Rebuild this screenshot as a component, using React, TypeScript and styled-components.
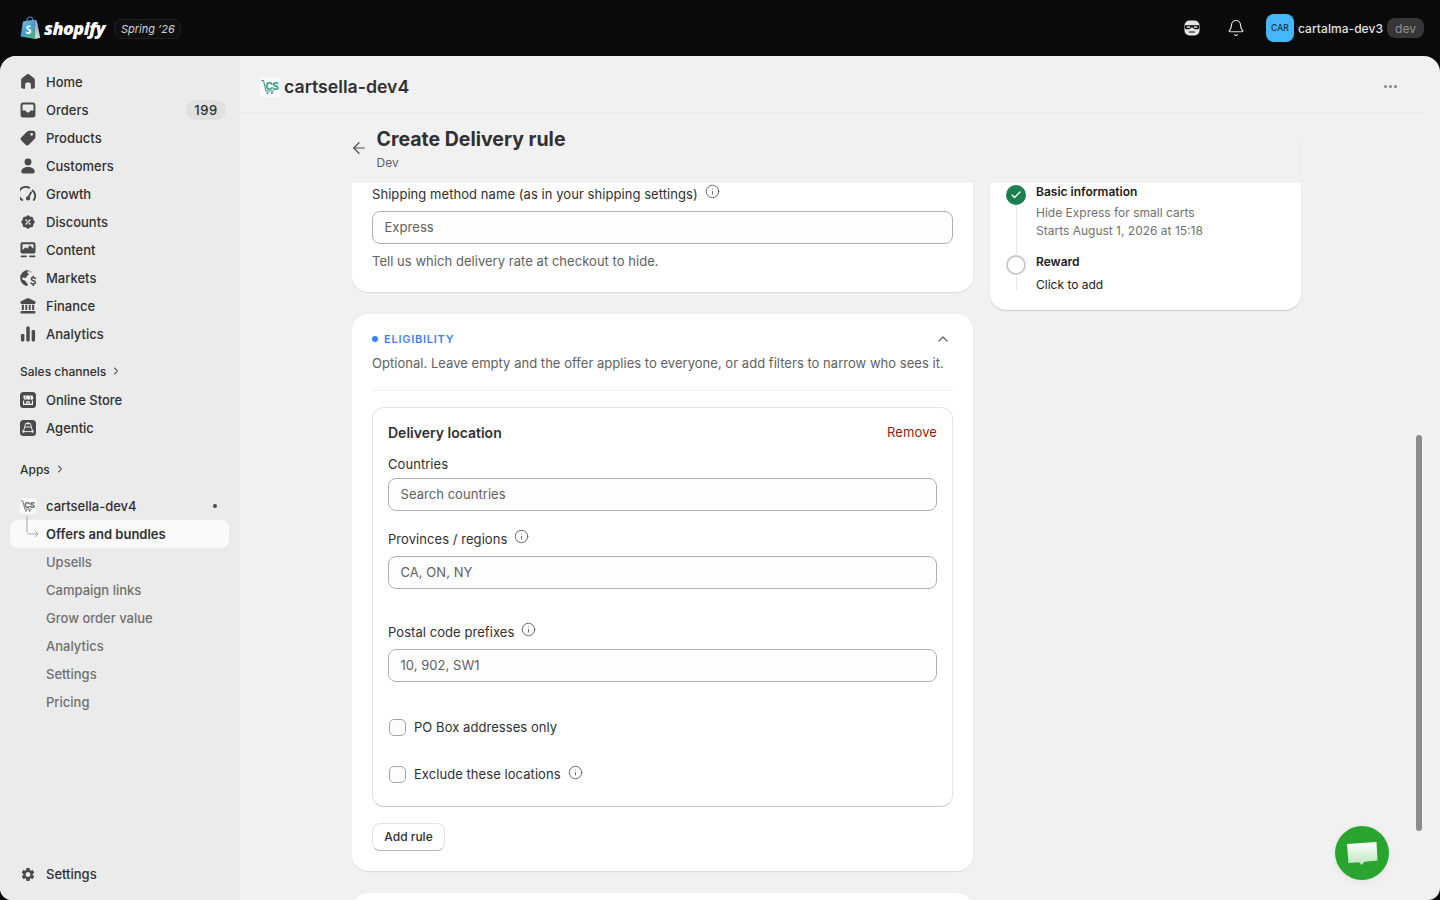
import React from 'react';
import styled, { createGlobalStyle } from 'styled-components';
import { ArrowLeft, Bell, Check, ChevronRight, ChevronUp, Info } from 'lucide-react';
import { MdSettings } from 'react-icons/md';
import { TbRosetteDiscountFilled } from 'react-icons/tb';

const GlobalStyle = createGlobalStyle`
  html, body {
    margin: 0;
    height: 100%;
    overflow: hidden;
    background: #0a0a0a;
    font-family: Inter, "Liberation Sans", sans-serif;
    color: #303030;
    -webkit-font-smoothing: antialiased;
  }
  * { box-sizing: border-box; }
`;

const Page = styled.div`
  width: 1440px;
  height: 900px;
  display: flex;
  flex-direction: column;
  background: #0a0a0a;
`;

/* top bar */
const TopBar = styled.header`
  height: 56px;
  flex: none;
  display: flex;
  align-items: center;
  justify-content: space-between;
  padding: 0 16px 0 20px;
`;

const Brand = styled.div`
  display: flex;
  align-items: center;
`;

const Wordmark = styled.span`
  font-family: "Open Sans", sans-serif;
  font-style: italic;
  font-weight: 800;
  font-size: 18px;
  letter-spacing: -0.6px;
  color: #fff;
  margin-left: 3px;
  line-height: 1;
`;

const SpringPill = styled.span`
  margin: 2px 0 0 9px;
  height: 20px;
  padding: 0 5px 0 6px;
  display: flex;
  align-items: center;
  border-radius: 7px;
  border: 1px solid #1f1f1f;
  background: #101010;
  color: #d4d4d4;
  font-size: 11px;
  font-style: italic;
`;

const TopActions = styled.div`
  display: flex;
  align-items: center;
`;

const TopIcon = styled.span<{ $gap: number }>`
  display: flex;
  color: #e3e3e3;
  margin-right: ${(p) => p.$gap}px;
`;

const StoreAvatar = styled.span`
  width: 28px;
  height: 28px;
  border-radius: 8px;
  background: #44b8fb;
  color: #123247;
  font-size: 8.5px;
  font-weight: 500;
  display: flex;
  align-items: center;
  justify-content: center;
  letter-spacing: 0.2px;
`;

const StoreName = styled.span`
  margin-left: 4px;
  font-size: 12px;
  letter-spacing: 0.05px;
  font-weight: 450;
  color: #e3e3e3;
`;

const DevPill = styled.span`
  margin-left: 4px;
  height: 20px;
  width: 37px;
  border-radius: 8px;
  background: #363636;
  color: #949494;
  font-size: 12px;
  display: flex;
  align-items: center;
  justify-content: center;
`;

/* frame */
const Frame = styled.div`
  flex: 1;
  min-height: 0;
  display: flex;
  position: relative;
  overflow: hidden;
  border-radius: 16px 16px 12px 12px;
  background: #f1f1f1;
`;

/* sidebar */
const Sidebar = styled.nav`
  width: 240px;
  flex: none;
  background: #ebebeb;
  padding: 12px 11px 12px 10px;
  display: flex;
  flex-direction: column;
`;

const NavRow = styled.div<{ $active?: boolean; $top?: number }>`
  position: relative;
  height: 28px;
  flex: none;
  margin-top: ${(p) => p.$top ?? 0}px;
  display: flex;
  align-items: center;
  padding: 0 4px 0 10px;
  border-radius: 8px;
  background: ${(p) => (p.$active ? '#fafafa' : 'transparent')};
`;

const NavIcon = styled.span`
  width: 16px;
  height: 16px;
  flex: none;
  margin-right: 10px;
  display: flex;
  align-items: center;
  justify-content: center;
  color: #4a4a4a;
`;

const NavLabel = styled.span<{ $tone?: 'strong' | 'sub' }>`
  flex: 1;
  font-size: 13px;
  font-weight: ${(p) => (p.$tone === 'strong' ? 600 : p.$tone === 'sub' ? 450 : 500)};
  color: ${(p) => (p.$tone === 'strong' ? '#303030' : p.$tone === 'sub' ? '#707070' : '#303030')};
`;

const SubIndent = styled.span`
  width: 26px;
  flex: none;
`;

const CountBadge = styled.span`
  width: 40px;
  height: 20px;
  margin-right: -1px;
  border-radius: 10px;
  background: #e0e0e0;
  font-size: 13px;
  font-weight: 550;
  letter-spacing: 0.5px;
  color: #303030;
  display: flex;
  align-items: center;
  justify-content: center;
`;

const PinDot = styled.span`
  width: 4px;
  height: 4px;
  border-radius: 50%;
  background: #4a4a4a;
  margin-right: 8px;
`;

const SectionHead = styled.div<{ $top: number }>`
  margin-top: ${(p) => p.$top}px;
  height: 28px;
  flex: none;
  padding-left: 10px;
  display: flex;
  align-items: center;
  gap: 4px;
  font-size: 12px;
  font-weight: 500;
  color: #303030;
  svg { color: #616161; }
`;

const SidebarSpacer = styled.div`
  flex: 1;
`;

const Connector = styled.svg`
  position: absolute;
  left: 15px;
  top: -4px;
`;

/* main */
const Main = styled.main`
  flex: 1;
  min-width: 0;
  display: flex;
  flex-direction: column;
  padding-right: 16px;
`;

const AppHeader = styled.div`
  height: 57px;
  flex: none;
  display: flex;
  align-items: center;
  justify-content: space-between;
  border-bottom: 1px solid #ebebeb;
  padding: 5px 27px 0 20px;
`;

const AppName = styled.div`
  display: flex;
  align-items: center;
  gap: 4px;
  font-size: 17.7px;
  font-weight: 600;
  color: #303030;
`;

const LogoTile = styled.span`
  width: 20px;
  height: 20px;
  display: flex;
  border-radius: 4px;
  background: #fff;
`;

const Dots = styled.span`
  display: flex;
  gap: 2px;
  i {
    width: 3px;
    height: 3px;
    border-radius: 50%;
    background: #8a8a8a;
  }
`;

const TitleBar = styled.div`
  position: relative;
  height: 70px;
  flex: none;
  margin-left: 112px;
  width: 949px;
  display: flex;
  align-items: center;
  &::after {
    content: '';
    position: absolute;
    right: 0;
    top: 27px;
    bottom: 0;
    width: 1px;
    background: #ebebeb;
  }
`;

const BackButton = styled.span`
  width: 25px;
  display: flex;
  color: #4a4a4a;
  margin-left: -2px;
  margin-right: 1.5px;
`;

const TitleStack = styled.div`
  display: flex;
  flex-direction: column;
  gap: 2px;
`;

const Title = styled.h1`
  margin: 0;
  font-size: 19.5px;
  line-height: 28px;
  font-weight: 650;
  color: #303030;
`;

const Subtitle = styled.div`
  font-size: 12px;
  line-height: 16px;
  font-weight: 400;
  color: #616161;
`;

const Columns = styled.div`
  flex: 1;
  min-height: 0;
  overflow: hidden;
  margin-left: 112px;
  display: flex;
  align-items: flex-start;
  gap: 17px;
`;

const PrimaryColumn = styled.div`
  width: 621px;
  flex: none;
  display: flex;
  flex-direction: column;
  gap: 22px;
`;

const Card = styled.section<{ $cut?: boolean }>`
  background: #fff;
  border-radius: ${(p) => (p.$cut ? '0 0 16px 16px' : '16px')};
  box-shadow: 0 1px 1px rgba(0, 0, 0, 0.08), 0 0 0 1px rgba(0, 0, 0, 0.012);
  padding: 0 20px;
`;

const NextCard = styled(Card)`
  height: 120px;
`;

const FirstBody = styled.div`
  height: 109px;
  padding-top: 1px;
`;

const LabelRow = styled.div<{ $mb: number }>`
  display: flex;
  align-items: center;
  height: 20px;
  gap: 7px;
  margin-bottom: ${(p) => p.$mb}px;
  font-size: 13px;
  font-weight: 400;
  letter-spacing: 0.06px;
  color: #303030;
  svg {
    color: #616161;
    position: relative;
    top: -3px;
  }
`;

const Input = styled.div`
  height: 33px;
  border: 1px solid #b0b0b0;
  border-radius: 8px;
  background: #fdfdfd;
  padding: 0 11.5px 2px;
  display: flex;
  align-items: center;
  font-size: 13px;
  font-weight: 400;
  letter-spacing: 0.05px;
  color: #616161;
`;

const Help = styled.div`
  margin-top: 7px;
  font-size: 13px;
  line-height: 20px;
  font-weight: 400;
  letter-spacing: 0.04px;
  color: #616161;
`;

const SectionTop = styled.div`
  height: 20px;
  margin-top: 15px;
  display: flex;
  align-items: center;
  gap: 6px;
  svg { margin-left: auto; margin-right: 2px; color: #616161; }
`;

const BlueDot = styled.span`
  width: 6px;
  height: 6px;
  border-radius: 50%;
  background: #3b82f6;
`;

const Eyebrow = styled.span`
  font-size: 11px;
  font-weight: 600;
  letter-spacing: 0.75px;
  color: #3b82f6;
`;

const Lead = styled.div`
  margin-top: 4px;
  font-size: 13px;
  line-height: 20px;
  letter-spacing: 0.03px;
  color: #616161;
`;

const Divider = styled.hr`
  margin: 17px 0 16px;
  border: 0;
  height: 1px;
  background: #f1f1f1;
`;

const RuleBox = styled.div`
  border: 1px solid #e3e3e3;
  border-bottom-color: #c9c9c9;
  border-radius: 12px;
  padding: 14px 15px;
  height: 400px;
`;

const RuleHead = styled.div`
  display: flex;
  justify-content: space-between;
  align-items: center;
  height: 20px;
`;

const RuleName = styled.span`
  font-size: 14px;
  font-weight: 600;
`;

const Remove = styled.span`
  font-size: 13px;
  font-weight: 400;
  letter-spacing: 0.1px;
  color: #8e1f0b;
`;

const FieldBlock = styled.div<{ $top: number }>`
  margin-top: ${(p) => p.$top}px;
`;

const CheckRow = styled.div<{ $top: number }>`
  margin-top: ${(p) => p.$top}px;
  height: 20px;
  display: flex;
  align-items: center;
  gap: 7px;
  font-size: 13px;
  font-weight: 400;
  letter-spacing: 0.06px;
  color: #303030;
  svg { color: #616161; position: relative; top: -2px; }
`;

const Box = styled.span`
  width: 17px;
  height: 17px;
  margin-left: 1px;
  margin-right: 1px;
  border: 1px solid #a6a6a6;
  border-radius: 5px;
  background: #fdfdfd;
`;

const AddRule = styled.button`
  display: block;
  margin: 16px 0 20px;
  width: 73px;
  height: 28px;
  border: 1px solid #e3e3e3;
  border-bottom-color: #b5b5b5;
  border-radius: 8px;
  background: #fff;
  padding: 0 0 1px;
  font-family: inherit;
  font-size: 12px;
  font-weight: 500;
  color: #303030;
`;

const StepsCard = styled(Card)`
  width: 311px;
  flex: none;
  height: 127px;
  padding: 2px 16px 0;
  box-shadow: 0 1px 1px rgba(0, 0, 0, 0.16);
`;

const Step = styled.div<{ $h: number }>`
  display: flex;
  gap: 10px;
  height: ${(p) => p.$h}px;
`;

const Rail = styled.div`
  width: 20px;
  flex: none;
  display: flex;
  flex-direction: column;
  align-items: center;
`;

const Mark = styled.span<{ $done?: boolean }>`
  width: 20px;
  height: 20px;
  flex: none;
  border-radius: 50%;
  display: flex;
  align-items: center;
  justify-content: center;
  color: #fff;
  background: ${(p) => (p.$done ? '#1a8050' : '#fff')};
  border: ${(p) => (p.$done ? 'none' : '2px solid #c9cccf')};
`;

const RailLine = styled.span`
  width: 1px;
  flex: 1;
  margin: 2px 0;
  background: #e3e3e3;
`;

const StepText = styled.div`
  display: flex;
  flex-direction: column;
`;

const StepTitle = styled.div`
  margin: -1px 0 1px;
  font-size: 12px;
  line-height: 16px;
  font-weight: 600;
  color: #1a1a1a;
`;

const StepLine = styled.div<{ $dark?: boolean }>`
  font-size: 12px;
  line-height: 18px;
  color: ${(p) => (p.$dark ? '#1a1a1a' : '#707070')};
`;

const FirstLine = styled(StepLine)`
  margin-top: 3px;
`;

const ClickLine = styled(StepLine)`
  margin-top: 5px;
`;

/* overlays */
const ScrollThumb = styled.div`
  position: absolute;
  right: 18px;
  top: 379px;
  width: 6px;
  height: 396px;
  border-radius: 3px;
  background: #8c8c8c;
`;

const ChatButton = styled.div`
  position: absolute;
  left: 1335px;
  top: 770px;
  width: 54px;
  height: 54px;
  border-radius: 50%;
  background: #28a42f;
  box-shadow: 0 2px 8px rgba(0, 0, 0, 0.06);
  display: flex;
  align-items: center;
  justify-content: center;
`;

const fill = { width: 16, height: 16, viewBox: '3 3 14 14', fill: 'currentColor' };

const HomeIcon = () => (
  <svg {...fill}>
    <path d="M8.900 3.400a1.750 1.750 0 0 1 2.200 0l4.250 3.400c.41.33.65.83.65 1.360v6.090c0 .97-.78 1.750-1.750 1.750H12.500v-3.750a1.750 1.750 0 0 0-1.750-1.750h-1.500A1.750 1.750 0 0 0 7.500 12.250V16H5.750A1.750 1.750 0 0 1 4 14.250V8.160c0-.53.24-1.030.65-1.360z" />
  </svg>
);

const OrdersIcon = () => (
  <svg {...fill} fillRule="evenodd">
    <path d="M5.500 3.500h9c1.100 0 2 .9 2 2v9c0 1.100-.9 2-2 2h-9c-1.100 0-2-.9-2-2v-9c0-1.100.9-2 2-2zM5.200 5.600v4.900h2.300c.4 0 .7.2.9.5.3.7.9 1.100 1.600 1.100s1.300-.4 1.600-1.100c.2-.3.5-.5.9-.5h2.300V5.600c0-.3-.2-.5-.5-.5H5.700c-.3 0-.5.2-.5.5z" />
  </svg>
);

const TagIcon = () => (
  <svg {...fill} fillRule="evenodd">
    <path d="M10.900 3.600h3.600c1.100 0 2 .9 2 2v3.600c0 .5-.2 1-.6 1.400l-5.200 5.200a2 2 0 0 1-2.800 0l-3.700-3.700a2 2 0 0 1 0-2.800l5.300-5.100c.4-.4.9-.6 1.400-.6zM13.200 8a1.200 1.200 0 1 0 0-2.400 1.200 1.200 0 0 0 0 2.400z" />
  </svg>
);

const PersonIcon = () => (
  <svg {...fill}>
    <circle cx="10" cy="6.500" r="3" />
    <path d="M4.200 14.600c0-2.300 2.600-3.700 5.800-3.700s5.800 1.400 5.800 3.700v.4c0 .8-.7 1.500-1.500 1.500H5.700c-.8 0-1.500-.7-1.500-1.500z" />
  </svg>
);

const GaugeIcon = () => (
  <svg width="16" height="16" viewBox="0 0 16 16" fill="none" stroke="currentColor" strokeWidth="1.900" strokeLinecap="round">
    <path d="M2.200 14A7 7 0 0 1 9.200 1.800" />
    <path d="M12.600 4.400a7 7 0 0 1 1.200 9.600" />
    <path d="M8 12.400l3-6" />
    <circle cx="8" cy="12.400" r="1.200" fill="currentColor" />
  </svg>
);

const ContentIcon = () => (
  <svg {...fill} fillRule="evenodd">
    <path d="M5.200 3.200h9.600c1 0 1.800.8 1.800 1.800v6.300c0 1-.8 1.800-1.800 1.800H5.200c-1 0-1.800-.8-1.800-1.800V5c0-1 .8-1.800 1.800-1.800zM5.200 10.200l2.600-2.600 1.500 1.400 2.200-3.200 3.300 3V5.200c0-.1-.1-.2-.2-.2H5.400c-.1 0-.2.1-.2.2z" />
    <rect x="3.600" y="14.800" width="5.400" height="1.500" rx=".7" />
    <rect x="11" y="14.800" width="5.400" height="1.500" rx=".7" />
  </svg>
);

const MarketsIcon = () => (
  <svg {...fill}>
    <path d="M10 3a7 7 0 0 0-1 13.900c.5.1.9-.3.8-.8-.1-.9-.3-1.400-1-2-.6-.5-.6-1.200-1.200-1.700-.8-.6-2.200-.6-2.600-1.600-.3-.8.4-1.300 1.100-1.200.8.1 1.200.7 1.900.4.8-.3.5-1.200 1.100-1.800.5-.5 1.500-.6 1.600-1.400.1-.8-1-1-1.300-1.600-.2-.4.1-.9.6-1 .9.1 1.700.4 2.400.9.3.2.7 0 .7-.3 0-.5-1.400-.8-2.100-.8z" />
    <path d="M14.600 8.400v1m0 7.100v-1M16.400 10.400c-.4-.6-1-.9-1.800-.9-.9 0-1.700.5-1.700 1.400 0 2 3.600 1 3.600 3 0 .9-.8 1.400-1.900 1.400-.8 0-1.500-.3-1.900-1" fill="none" stroke="currentColor" strokeWidth="1.300" strokeLinecap="round" />
  </svg>
);

const BankIcon = () => (
  <svg {...fill} fillRule="evenodd">
    <path d="M9.300 3.300a1.600 1.600 0 0 1 1.400 0l5.300 2.600c.4.2.5.5.5.9v.7c0 .4-.3.7-.7.7H4.200c-.4 0-.7-.3-.7-.7v-.7c0-.4.1-.7.5-.9z" />
    <path d="M4.600 9h1.800v4.400H4.600zM7.700 9h1.600v4.400H7.700zM10.700 9h1.600v4.400h-1.600zM13.600 9h1.800v4.400h-1.800z" />
    <rect x="3.500" y="14.400" width="13" height="2.200" rx=".6" />
  </svg>
);

const BarsIcon = () => (
  <svg {...fill}>
    <rect x="3.800" y="10" width="3" height="6.500" rx="1" />
    <rect x="8.500" y="3.500" width="3" height="13" rx="1" />
    <rect x="13.200" y="6.500" width="3" height="10" rx="1" />
  </svg>
);

const StoreIcon = () => (
  <svg width="16" height="16" viewBox="0 0 16 16">
    <rect width="16" height="16" rx="3.500" fill="#4a4a4a" />
    <path d="M3.400 3.600h9.200l.8 2.700c0 .9-.8 1.400-1.700 1.400-.7 0-1.300-.4-1.500-1-.2.6-1 1-1.700 1s-1.300-.4-1.600-1c-.3.6-.9 1-1.600 1-.9 0-1.700-.5-1.700-1.400z" fill="#fff" />
    <path d="M6 3.800l-.5 3M10 3.800l.5 3" stroke="#4a4a4a" strokeWidth=".7" />
    <path d="M3.600 8.400v4h8.800v-4M6.800 12.400V9.800h2.400v2.600" fill="none" stroke="#fff" strokeWidth="1.100" />
  </svg>
);

const AgenticIcon = () => (
  <svg width="16" height="16" viewBox="0 0 16 16">
    <rect width="16" height="16" rx="3.500" fill="#4a4a4a" />
    <path d="M5.600 3.400h4.800l2.200 8.200H3.400zM5.200 7h5.600" fill="none" stroke="#e8e8e8" strokeWidth="1" strokeLinejoin="round" />
    <circle cx="3.400" cy="11.600" r="1.200" fill="#e8e8e8" />
    <circle cx="12.600" cy="11.600" r="1.200" fill="#e8e8e8" />
    <circle cx="8" cy="3.400" r="1.200" fill="#e8e8e8" />
  </svg>
);

const CartsellaLogo = ({ tint, size }: { tint: string; size: number }) => (
  <svg width={size} height={size} viewBox="0 0 20 20" fill="none">
    <rect width="20" height="20" rx="4" fill="#fafafa" />
    <path d="M1.500 3.500h2l2.500 10.500h8" stroke={tint} strokeWidth="1.100" strokeLinecap="round" strokeLinejoin="round" />
    <circle cx="7.500" cy="16" r="1.100" fill={tint} />
    <circle cx="12" cy="16" r="1.100" fill={tint} />
    <text x="5.400" y="12.500" fontFamily="Inter, sans-serif" fontSize="10" fontWeight="800" letterSpacing="-0.6" fill={tint}>CS</text>
  </svg>
);

const ShopifyBag = () => (
  <svg width="21" height="24" viewBox="0 0 21 24">
    <defs>
      <linearGradient id="bagFace" x1="0" y1="0" x2="0.6" y2="1">
        <stop offset="0" stopColor="#7fd0e0" />
        <stop offset="0.55" stopColor="#3f9fd8" />
        <stop offset="1" stopColor="#4fae8f" />
      </linearGradient>
      <linearGradient id="bagSide" x1="0" y1="0" x2="0" y2="1">
        <stop offset="0" stopColor="#8a94c8" />
        <stop offset="1" stopColor="#c8e8d0" />
      </linearGradient>
    </defs>
    <path d="M6.600 5.400C6.900 3 8.400 1 10.200 1c1.600 0 2.600 1.600 2.800 3.600" fill="none" stroke="#5c7fc0" strokeWidth="1.200" />
    <path d="M3 5.600l11.200-1.800L15 23 .6 20.600z" fill="url(#bagFace)" />
    <path d="M14.200 3.800l2.600.6 3.400 17.300L15 23z" fill="url(#bagSide)" />
    <path d="M10.800 9.800c-.5-.3-1.100-.4-1.800-.4-1.700 0-2.800 1-2.800 2.400 0 2 3 2.200 3 3.400 0 .5-.4.9-1.100.9-.8 0-1.700-.5-1.700-.5l-.5 1.900s1 .6 2.300.6c1.900 0 3.100-1.100 3.100-2.800 0-2.300-3-2.500-3-3.500 0-.3.2-.7 1-.7.6 0 1.200.3 1.200.3z" fill="#fff" />
  </svg>
);

const SidekickIcon = () => (
  <svg width="16" height="16" viewBox="0 0 16 16">
    <rect x="0.500" y="0.500" width="15" height="15" rx="5" fill="#e3e3e3" />
    <path d="M1 5.200h14v2.600c0 .8-.6 1.400-1.400 1.400h-3L8.600 7.600H7.400L5.400 9.200h-3C1.600 9.200 1 8.600 1 7.800z" fill="#0a0a0a" />
    <rect x="2.800" y="6.300" width="3.400" height="1.700" rx=".6" fill="#bdbdbd" />
    <rect x="9.800" y="6.300" width="3.400" height="1.700" rx=".6" fill="#bdbdbd" />
    <path d="M5.500 12h5" stroke="#0a0a0a" strokeWidth="1.200" strokeLinecap="round" />
  </svg>
);

const primaryNav: [string, React.ReactNode][] = [
  ['Home', <HomeIcon />],
  ['Orders', <OrdersIcon />],
  ['Products', <TagIcon />],
  ['Customers', <PersonIcon />],
  ['Growth', <GaugeIcon />],
  ['Discounts', <TbRosetteDiscountFilled size={22} />],
  ['Content', <ContentIcon />],
  ['Markets', <MarketsIcon />],
  ['Finance', <BankIcon />],
  ['Analytics', <BarsIcon />],
];

const appLinks = ['Upsells', 'Campaign links', 'Grow order value', 'Analytics', 'Settings', 'Pricing'];

export default function App() {
  return (
    <Page>
      <GlobalStyle />
      <TopBar>
        <Brand>
          <ShopifyBag />
          <Wordmark>shopify</Wordmark>
          <SpringPill>Spring ’26</SpringPill>
        </Brand>
        <TopActions>
          <TopIcon $gap={27}><SidekickIcon /></TopIcon>
          <TopIcon $gap={21}><Bell size={18} strokeWidth={1.6} /></TopIcon>
          <StoreAvatar>CAR</StoreAvatar>
          <StoreName>cartalma-dev3</StoreName>
          <DevPill>dev</DevPill>
        </TopActions>
      </TopBar>

      <Frame>
        <Sidebar>
          {primaryNav.map(([label, icon]) => (
            <NavRow key={label}>
              <NavIcon>{icon}</NavIcon>
              <NavLabel>{label}</NavLabel>
              {label === 'Orders' && <CountBadge>199</CountBadge>}
            </NavRow>
          ))}
          <SectionHead $top={9}>Sales channels <ChevronRight size={12} strokeWidth={2.2} /></SectionHead>
          <NavRow $top={1}>
            <NavIcon><StoreIcon /></NavIcon>
            <NavLabel>Online Store</NavLabel>
          </NavRow>
          <NavRow>
            <NavIcon><AgenticIcon /></NavIcon>
            <NavLabel>Agentic</NavLabel>
          </NavRow>
          <SectionHead $top={13}>Apps <ChevronRight size={12} strokeWidth={2.2} /></SectionHead>
          <NavRow $top={9}>
            <NavIcon><CartsellaLogo tint="#6b6b6b" size={16} /></NavIcon>
            <NavLabel>cartsella-dev4</NavLabel>
            <PinDot />
          </NavRow>
          <NavRow $active>
            <Connector width="24" height="28" viewBox="0 0 24 28" fill="none" stroke="#a8a8a8" strokeWidth="1">
              <path d="M2 0v15c0 2 1 3 3 3h8M10 15l3 3-3 3" />
            </Connector>
            <SubIndent />
            <NavLabel $tone="strong">Offers and bundles</NavLabel>
          </NavRow>
          {appLinks.map((label) => (
            <NavRow key={label}>
              <SubIndent />
              <NavLabel $tone="sub">{label}</NavLabel>
            </NavRow>
          ))}
          <SidebarSpacer />
          <NavRow>
            <NavIcon><MdSettings size={21} /></NavIcon>
            <NavLabel>Settings</NavLabel>
          </NavRow>
        </Sidebar>

        <Main>
          <AppHeader>
            <AppName>
              <LogoTile><CartsellaLogo tint="#3f9e8f" size={20} /></LogoTile>
              cartsella-dev4
            </AppName>
            <Dots><i /><i /><i /></Dots>
          </AppHeader>
          <TitleBar>
            <BackButton><ArrowLeft size={18} strokeWidth={1.6} /></BackButton>
            <TitleStack>
              <Title>Create Delivery rule</Title>
              <Subtitle>Dev</Subtitle>
            </TitleStack>
          </TitleBar>
          <Columns>
            <PrimaryColumn>
              <Card $cut>
                <FirstBody>
                  <LabelRow $mb={7}>
                    Shipping method name (as in your shipping settings) <Info size={15} strokeWidth={1.5} />
                  </LabelRow>
                  <Input>Express</Input>
                  <Help>Tell us which delivery rate at checkout to hide.</Help>
                </FirstBody>
              </Card>
              <Card>
                <SectionTop>
                  <BlueDot />
                  <Eyebrow>ELIGIBILITY</Eyebrow>
                  <ChevronUp size={16} strokeWidth={1.8} />
                </SectionTop>
                <Lead>Optional. Leave empty and the offer applies to everyone, or add filters to narrow who sees it.</Lead>
                <Divider />
                <RuleBox>
                  <RuleHead>
                    <RuleName>Delivery location</RuleName>
                    <Remove>Remove</Remove>
                  </RuleHead>
                  <FieldBlock $top={12}>
                    <LabelRow $mb={4}>Countries</LabelRow>
                    <Input>Search countries</Input>
                  </FieldBlock>
                  <FieldBlock $top={18}>
                    <LabelRow $mb={7}>Provinces / regions <Info size={15} strokeWidth={1.5} /></LabelRow>
                    <Input>CA, ON, NY</Input>
                  </FieldBlock>
                  <FieldBlock $top={33}>
                    <LabelRow $mb={7}>Postal code prefixes <Info size={15} strokeWidth={1.5} /></LabelRow>
                    <Input>10, 902, SW1</Input>
                  </FieldBlock>
                  <CheckRow $top={35}><Box />PO Box addresses only</CheckRow>
                  <CheckRow $top={27}><Box />Exclude these locations <Info size={15} strokeWidth={1.5} /></CheckRow>
                </RuleBox>
                <AddRule>Add rule</AddRule>
              </Card>
              <NextCard />
            </PrimaryColumn>
            <StepsCard $cut>
              <Step $h={70}>
                <Rail>
                  <Mark $done><Check size={12} strokeWidth={2.5} /></Mark>
                  <RailLine />
                </Rail>
                <StepText>
                  <StepTitle>Basic information</StepTitle>
                  <FirstLine>Hide Express for small carts</FirstLine>
                  <StepLine>Starts August 1, 2026 at 15:18</StepLine>
                </StepText>
              </Step>
              <Step $h={37}>
                <Rail>
                  <Mark />
                  <RailLine />
                </Rail>
                <StepText>
                  <StepTitle>Reward</StepTitle>
                  <ClickLine $dark>Click to add</ClickLine>
                </StepText>
              </Step>
            </StepsCard>
          </Columns>
        </Main>

        <ScrollThumb />
        <ChatButton>
          <svg width="34" height="28" viewBox="0 0 34 28">
            <defs>
              <linearGradient id="chatFace" x1="0" y1="0" x2="0" y2="1">
                <stop offset="0" stopColor="#ffffff" />
                <stop offset="1" stopColor="#b9e6bc" />
              </linearGradient>
            </defs>
            <path d="M2 5l29.500-2 1 18.500-13 1.200-3 3.300-2.400-2.700-10.600.7z" fill="url(#chatFace)" />
          </svg>
        </ChatButton>
      </Frame>
    </Page>
  );
}
